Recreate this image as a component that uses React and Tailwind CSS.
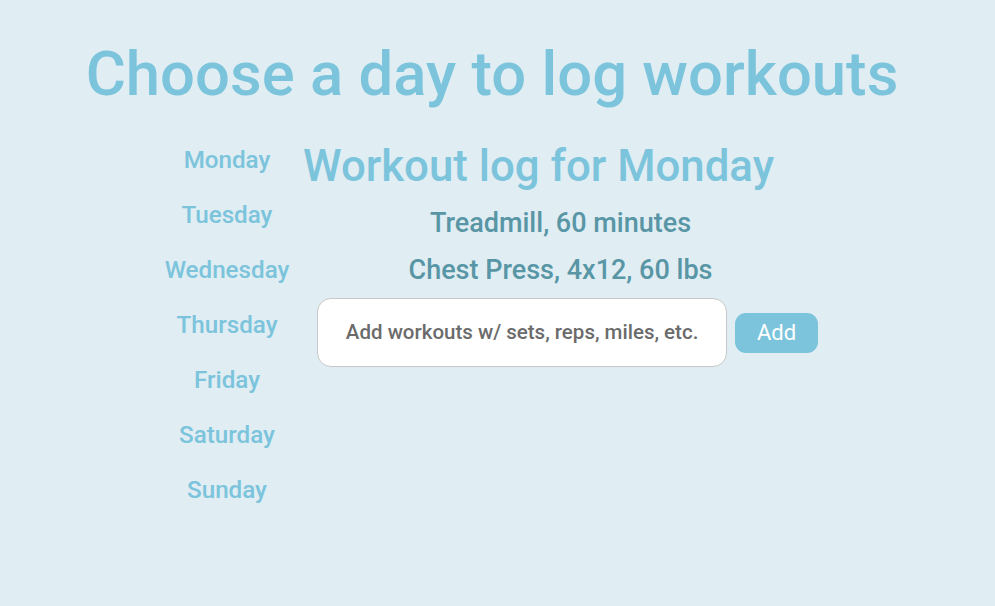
import React from "react";

const days = ["Monday", "Tuesday", "Wednesday", "Thursday", "Friday", "Saturday", "Sunday"];

export default function App() {
  return (
    <div className="min-h-[606px] w-full bg-[#e0edf3] font-['Roboto',sans-serif]">
      <h1 className="pr-[11px] pt-[32px] text-center text-[61.6px] font-medium leading-[84px] text-[#7bc4dc]">
        Choose a day to log workouts
      </h1>
      <div className="mt-[30px] flex justify-center gap-[10px] pr-[12px]">
        <ul className="-ml-[2px] mr-[2px] flex w-[128px] flex-col items-center gap-[27px]">
          {days.map((d) => (
            <li key={d} className="text-[24.2px] font-medium leading-[28px] text-[#7bc4dc]">
              {d}
            </li>
          ))}
        </ul>
        <div className="flex w-[515px] flex-col">
          <h2 className="-mt-[8px] whitespace-nowrap text-[43.8px] font-medium leading-[56px] text-[#7bc4dc]">
            Workout log for Monday
          </h2>
          <div className="mt-[11px] flex flex-col items-center">
            <p className="text-[27px] font-medium leading-[36px] text-[#5896a6]">Treadmill, 60 minutes</p>
            <p className="mt-[11px] text-[27px] font-medium leading-[36px] text-[#5896a6]">Chest Press, 4x12, 60 lbs</p>
          </div>
          <div className="mt-[10px] flex items-center gap-[8px] pl-[14px]">
            <div className="flex h-[69px] w-[411px] items-center justify-center rounded-[14px] border border-[#c8c8c8] bg-white text-[20.5px] font-medium text-[#6b6b6b]">
              Add workouts w/ sets, reps, miles, etc.
            </div>
            <button className="h-[40px] w-[83px] rounded-[11px] bg-[#7bc4dc] text-[22px] text-white">Add</button>
          </div>
        </div>
      </div>
    </div>
  );
}
